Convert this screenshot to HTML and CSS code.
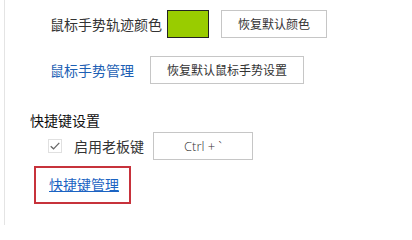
FILE: index.html
```html
<!DOCTYPE html>
<html lang="zh-CN">
<head>
<meta charset="utf-8">
<link rel="stylesheet" href="styles.css">
</head>
<body>
<div class="panel">
  <div class="row row-color">
    <span class="label">鼠标手势轨迹颜色</span>
    <span class="swatch"></span>
    <button class="btn btn-color">恢复默认颜色</button>
  </div>
  <div class="row row-gesture">
    <a class="link" href="#">鼠标手势管理</a>
    <button class="btn btn-gesture">恢复默认鼠标手势设置</button>
  </div>
  <div class="heading">快捷键设置</div>
  <div class="row row-boss">
    <span class="check">
      <svg width="14" height="14" viewBox="0 0 14 14"><path d="M2 7.2 L5.3 10.3 L12 3.4" fill="none" stroke="#666666" stroke-width="1.5"/></svg>
    </span>
    <span class="label">启用老板键</span>
    <span class="hotkey">Ctrl + `</span>
  </div>
  <div class="mark">
    <a class="link link-u" href="#">快捷键管理</a>
  </div>
</div>
</body>
</html>
```

FILE: styles.css
```css
html, body {
  margin: 0;
  padding: 0;
  background: #ffffff;
}
body {
  font-family: "Noto Sans CJK SC", "Noto Sans", sans-serif;
  font-size: 14px;
  line-height: 20px;
  color: #333333;
}
.panel {
  margin-left: 4px;
  border-left: 1px solid #e4e4e4;
  height: 225px;
  box-sizing: border-box;
  padding-top: 10px;
}
.row {
  display: flex;
  align-items: center;
  height: 28px;
}
.row-color {
  padding-left: 45px;
}
.label {
  white-space: nowrap;
}
.swatch {
  width: 42px;
  height: 28px;
  box-sizing: border-box;
  background: #99cc00;
  border: 1px solid #222222;
  margin-left: 5px;
}
.btn {
  height: 28px;
  box-sizing: border-box;
  background: #ffffff;
  border: 1px solid #c6c6c6;
  border-radius: 0;
  font-family: "Noto Sans CJK SC", sans-serif;
  font-size: 12px;
  color: #333333;
  padding: 0;
  line-height: 26px;
}
.btn-color {
  width: 106px;
  margin-left: 12px;
}
.row-gesture {
  margin-top: 18px;
  padding-left: 45px;
}
.link {
  color: #1d5fb4;
  text-decoration: none;
  white-space: nowrap;
}
.btn-gesture {
  width: 154px;
  margin-left: 16px;
}
.heading {
  margin-top: 26px;
  padding-left: 25px;
  color: #111111;
}
.row-boss {
  margin-top: 2px;
  padding-left: 43px;
}
.check {
  width: 14px;
  height: 14px;
  box-sizing: border-box;
  border: 1px solid #e0e0e0;
  display: flex;
  align-items: center;
  justify-content: center;
  overflow: hidden;
}
.row-boss .label {
  margin-left: 12px;
}
.hotkey {
  width: 100px;
  height: 28px;
  box-sizing: border-box;
  border: 1px solid #c6c6c6;
  margin-left: 9px;
  display: flex;
  align-items: center;
  justify-content: center;
  font-family: "Open Sans", "Noto Sans", sans-serif;
  font-size: 13px;
  font-weight: 300;
  color: #333333;
}
.mark {
  margin-top: 6px;
  margin-left: 29px;
  width: 97px;
  height: 38px;
  box-sizing: border-box;
  border: 2px solid #c7323b;
  padding: 6px 0 0 13px;
}
.link-u {
  text-decoration: underline;
  color: #1b63c2;
}
```
